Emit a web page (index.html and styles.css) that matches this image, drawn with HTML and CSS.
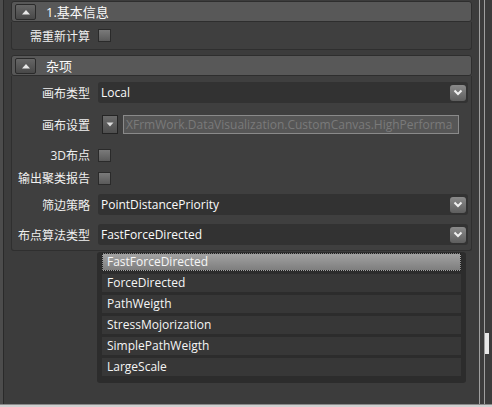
FILE: index.html
```html
<!DOCTYPE html>
<html>
<head>
<meta charset="utf-8">
<link rel="stylesheet" href="styles.css">
</head>
<body>
<div class="window">
  <div class="edge-left"></div>
  <div class="panel">
    <div class="section-head">
      <span class="toggle"><svg width="10" height="6" viewBox="0 0 10 6"><path d="M1 5.5 L5 1 L9 5.5 Z" fill="#e8e8e8"/></svg></span>
      <span class="section-title">1.基本信息</span>
    </div>
    <div class="group g1">
      <div class="row rcheck">
        <span class="label">需重新计算</span>
        <span class="check"></span>
      </div>
    </div>
    <div class="section-head h2">
      <span class="toggle"><svg width="10" height="6" viewBox="0 0 10 6"><path d="M1 5.5 L5 1 L9 5.5 Z" fill="#e8e8e8"/></svg></span>
      <span class="section-title">杂项</span>
    </div>
    <div class="group g2">
      <div class="row r1">
        <span class="label">画布类型</span>
        <div class="combo"><span class="combo-text">Local</span><span class="drop"><svg width="10" height="7" viewBox="0 0 10 7"><path d="M1.5 1.5 L5 5 L8.5 1.5" stroke="#f0f0f0" stroke-width="2" fill="none"/></svg></span></div>
      </div>
      <div class="row r2">
        <span class="label">画布设置</span>
        <span class="smallbtn"><svg width="8" height="5" viewBox="0 0 8 5"><path d="M0.5 0.5 L7.5 0.5 L4 4.5 Z" fill="#dcdcdc"/></svg></span>
        <div class="textbox">XFrmWork.DataVisualization.CustomCanvas.HighPerforma</div>
      </div>
      <div class="row r3">
        <span class="label">3D布点</span>
        <span class="check"></span>
      </div>
      <div class="row r4">
        <span class="label">输出聚类报告</span>
        <span class="check"></span>
      </div>
      <div class="row r5">
        <span class="label">筛边策略</span>
        <div class="combo"><span class="combo-text">PointDistancePriority</span><span class="drop"><svg width="10" height="7" viewBox="0 0 10 7"><path d="M1.5 1.5 L5 5 L8.5 1.5" stroke="#f0f0f0" stroke-width="2" fill="none"/></svg></span></div>
      </div>
      <div class="row r6">
        <span class="label">布点算法类型</span>
        <div class="combo"><span class="combo-text">FastForceDirected</span><span class="drop"><svg width="10" height="7" viewBox="0 0 10 7"><path d="M1.5 1.5 L5 5 L8.5 1.5" stroke="#f0f0f0" stroke-width="2" fill="none"/></svg></span></div>
      </div>
    </div>
    <div class="popup-wrap">
      <ul class="popup">
        <li class="item sel">FastForceDirected</li>
        <li class="item">ForceDirected</li>
        <li class="item">PathWeigth</li>
        <li class="item">StressMojorization</li>
        <li class="item">SimplePathWeigth</li>
        <li class="item">LargeScale</li>
      </ul>
    </div>
  </div>
  <div class="edge-right">
    <div class="vline a"></div>
    <div class="vline b"></div>
    <div class="thumb"></div>
  </div>
</div>
<div class="bottom"></div>
</body>
</html>
```

FILE: styles.css
```css
html, body {
  margin: 0;
  padding: 0;
  width: 492px;
  height: 407px;
  overflow: hidden;
  background: #3c3c3c;
  font-family: "Open Sans", "Noto Sans CJK SC", sans-serif;
  font-size: 12px;
  color: #f2f2f2;
}
.window {
  display: flex;
  height: 404px;
}
.edge-left {
  width: 3px;
  flex: none;
  border-right: 1px solid #2a2a2a;
  background: #4c4c4c;
}
.panel {
  width: 461px;
  flex: none;
  margin-left: 7px;
  display: flex;
  flex-direction: column;
}
.section-head {
  height: 19px;
  margin-top: 1px;
  background: #585858;
  border: 1px solid #2e2e2e;
  border-radius: 3px;
  display: flex;
  align-items: center;
}
.section-head.h2 { margin-top: 5px; }
.toggle {
  width: 19px;
  height: 14px;
  margin-left: 3px;
  border: 1px solid #2a2a2a;
  border-radius: 2px;
  background: linear-gradient(#666, #484848);
  display: flex;
  align-items: center;
  justify-content: center;
}
.section-title {
  margin-left: 10px;
  font-size: 13px;
  color: #fafafa;
}
.group {
  border: 1px solid #2f2f2f;
  border-top: none;
  border-radius: 0 0 3px 3px;
  background: #3f3f3f;
  display: flex;
  flex-direction: column;
}
.g1 { height: 27px; justify-content: center; }
.g2 { padding: 6px 0 5px; }
.row {
  display: flex;
  align-items: center;
}
.label {
  width: 78px;
  text-align: right;
  flex: none;
  color: #f0f0f0;
}
.check {
  width: 11px;
  height: 11px;
  margin-left: 8px;
  border: 1px solid #2a2a2a;
  background: linear-gradient(#7a7a7a, #5a5a5a);
}
.combo {
  margin-left: 8px;
  width: 370px;
  height: 21px;
  background: #323232;
  border-radius: 3px;
  display: flex;
  align-items: center;
  justify-content: space-between;
}
.combo-text {
  padding-left: 3px;
  color: #fbfbfb;
  font-size: 12px;
}
.drop {
  width: 16px;
  height: 16px;
  margin-right: 2px;
  border-radius: 3px;
  background: linear-gradient(#8a8a8a, #5e5e5e);
  display: flex;
  align-items: center;
  justify-content: center;
}
.r1 { height: 21px; }
.r2 { height: 21px; margin-top: 11px; }
.r3 { height: 14px; margin-top: 13px; }
.r4 { height: 14px; margin-top: 9px; }
.r5 { height: 21px; margin-top: 9px; }
.r6 { height: 21px; margin-top: 9px; }
.smallbtn {
  width: 14px;
  height: 17px;
  margin-left: 12px;
  border: 1px solid #242424;
  background: linear-gradient(#6a6a6a, #4e4e4e);
  display: flex;
  align-items: center;
  justify-content: center;
}
.textbox {
  margin-left: 5px;
  width: 332px;
  height: 17px;
  line-height: 17px;
  border: 1px solid #8a8a8a;
  background: #565656;
  color: #7a7a7a;
  font-size: 12px;
  padding-left: 2px;
  overflow: hidden;
  white-space: nowrap;
}
.popup-wrap {
  margin-left: 86px;
  margin-top: 1px;
  width: 369px;
  height: 131px;
  background: #2c2c2c;
  border-radius: 3px;
}
.popup {
  list-style: none;
  margin: 0;
  padding: 1px 5px 0;
  display: flex;
  flex-direction: column;
  gap: 3px;
}
.item {
  height: 18px;
  line-height: 18px;
  background: #373737;
  padding-left: 5px;
  font-size: 12px;
  color: #f5f5f5;
}
.item.sel {
  height: 16px;
  line-height: 16px;
  border: 1px dotted #222;
  background: linear-gradient(#a2a2a2, #7e7e7e);
  padding-left: 4px;
}
.edge-right {
  position: relative;
  flex: 1;
}
.vline {
  position: absolute;
  top: 0;
  bottom: 0;
  width: 1px;
  background: #a0a0a0;
}
.vline.a { left: 7px; }
.vline.b { left: 12px; }
.thumb {
  position: absolute;
  left: 13px;
  top: 333px;
  width: 4px;
  height: 21px;
  background: #e8e8e8;
}
.bottom {
  height: 3px;
  border-top: 1px solid #8a8a8a;
  background: #d0d0d0;
}
```
